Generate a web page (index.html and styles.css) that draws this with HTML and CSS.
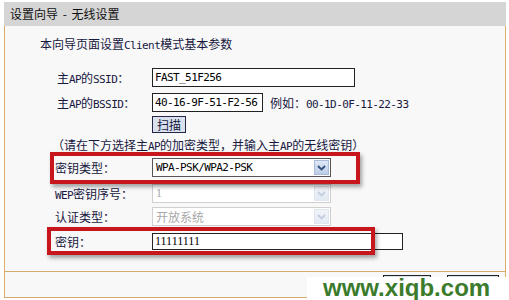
FILE: index.html
```html
<!DOCTYPE html>
<html lang="zh-CN">
<head>
  <meta charset="UTF-8" />
  <title>设置向导 - 无线设置</title>
  <link rel="stylesheet" href="styles.css">
</head>
<body>
  <div class="wizard">
    <div class="title">设置向导 - 无线设置</div>
    <div class="panel">
      <p class="intro">本向导页面设置<span class="en">Client</span>模式基本参数</p>

      <div class="row row-ssid">
        <span class="label">主<span class="en">AP</span>的<span class="en">SSID</span>：</span>
        <input class="text text-ssid" type="text" value="FAST_51F256" />
      </div>
      <div class="row row-bssid">
        <span class="label">主<span class="en">AP</span>的<span class="en">BSSID</span>：</span>
        <input class="text text-bssid" type="text" value="40-16-9F-51-F2-56" />
        <span class="hint">例如：<span class="en">00-1D-0F-11-22-33</span></span>
      </div>
      <div class="row row-scan">
        <button class="btn-scan">扫描</button>
      </div>
      <p class="note">（请在下方选择主<span class="en">AP</span>的加密类型，并输入主<span class="en">AP</span>的无线密钥）</p>

      <div class="mark mark-type">
        <div class="row">
          <span class="label">密钥类型：</span>
          <div class="select">
            <span class="value en">WPA-PSK/WPA2-PSK</span>
            <span class="arrow"><svg width="9" height="6" viewBox="0 0 9 6"><path d="M1 1l3.5 3.5L8 1" fill="none" stroke="currentColor" stroke-width="1.8"/></svg></span>
          </div>
        </div>
      </div>
      <div class="row row-wep">
        <span class="label"><span class="en">WEP</span>密钥序号：</span>
        <div class="select disabled">
          <span class="value num">1</span>
          <span class="arrow"><svg width="9" height="6" viewBox="0 0 9 6"><path d="M1 1l3.5 3.5L8 1" fill="none" stroke="currentColor" stroke-width="1.8"/></svg></span>
        </div>
      </div>
      <div class="row row-auth">
        <span class="label">认证类型：</span>
        <div class="select disabled">
          <span class="value">开放系统</span>
          <span class="arrow"><svg width="9" height="6" viewBox="0 0 9 6"><path d="M1 1l3.5 3.5L8 1" fill="none" stroke="currentColor" stroke-width="1.8"/></svg></span>
        </div>
      </div>
      <div class="mark mark-key">
        <div class="row">
          <span class="label">密钥：</span>
          <input class="text text-key" type="text" value="11111111" />
        </div>
      </div>
    </div>
    <div class="footer">
      <button class="btn-foot btn-back" aria-label="上一步"></button>
      <button class="btn-foot btn-next" aria-label="下一步"></button>
    </div>
  </div>
  <div class="watermark">www.xiqb.com</div>
</body>
</html>
```

FILE: styles.css
```css
* {
  box-sizing: border-box;
  margin: 0;
  padding: 0;
}
body {
  width: 509px;
  height: 300px;
  overflow: hidden;
  background: #fff;
  font-family: "Noto Sans CJK SC", sans-serif;
  font-size: 12px;
  color: #17173f;
  padding-top: 2px;
  position: relative;
}
.en {
  font-family: "DejaVu Sans Mono", "Noto Sans CJK SC", monospace;
  font-size: 11px;
  letter-spacing: -0.6px;
}
.wizard {
  margin-left: 4px;
  width: 502px;
}
.title {
  height: 24px;
  line-height: 24px;
  padding-left: 6px;
  background: #d5d5d5;
  color: #111;
  font-size: 12px;
  word-spacing: 2px;
}
.panel {
  height: 246px;
  background: #f8f8f8;
  border-left: 1px solid #dcae6a;
  border-right: 1px solid #dcae6a;
  border-bottom: 1px solid #d6aa6c;
  padding-left: 50px;
}
.intro {
  margin-left: -15px;
  padding-top: 9px;
  line-height: 17px;
}
.row {
  display: flex;
  align-items: center;
  height: 19px;
}
.label {
  width: 97px;
  flex: none;
}
.row-ssid {
  margin-top: 14px;
}
.row-ssid .label,
.row-bssid .label {
  padding-left: 2px;
}
.row-bssid {
  margin-top: 6px;
}
.text {
  height: 19px;
  border: 1px solid #222;
  background: #fff;
  color: #000;
  padding: 0 2px;
  font-family: "DejaVu Sans Mono", monospace;
  font-size: 11px;
  letter-spacing: -0.6px;
  outline: none;
}
.text-ssid {
  width: 203px;
}
.text-bssid {
  width: 111px;
}
.hint {
  margin-left: 7px;
}
.row-scan {
  margin-top: 4px;
  height: 17px;
  padding-left: 97px;
}
.btn-scan {
  width: 34px;
  height: 17px;
  border: 1px solid #26264a;
  background: #d9e1ec;
  color: #17173f;
  font-family: "Noto Sans CJK SC", sans-serif;
  font-size: 12px;
  line-height: 15px;
}
.note {
  margin-left: -3px;
  margin-top: 4px;
  height: 15px;
  line-height: 15px;
}
.mark {
  position: relative;
}
.mark::after {
  content: "";
  position: absolute;
  inset: 0;
  border: 4px solid #c8161d;
  box-shadow: 2px 3px 4px rgba(0, 0, 0, 0.35);
  pointer-events: none;
}
.mark-type {
  margin-left: -5px;
  width: 310px;
  height: 32px;
  padding: 6px 0 0 5px;
}
.select {
  display: flex;
  align-items: center;
  width: 179px;
  height: 19px;
  border: 1px solid #555;
  background: #fff;
  color: #000;
  padding: 1px;
}
.select .value {
  flex: 1;
  padding-left: 2px;
}
.select .num {
  font-family: "Liberation Serif", serif;
}
.arrow {
  width: 15px;
  height: 15px;
  flex: none;
  display: flex;
  align-items: center;
  justify-content: center;
  background: linear-gradient(#dfe8f6, #bccde8);
  border: 1px solid #a8bbd8;
  color: #36507c;
}
.select.disabled {
  border-color: #cfcfcf;
  color: #a8a8a8;
}
.select.disabled .arrow {
  background: linear-gradient(#f1f4f9, #e4eaf3);
  border-color: #e0e6ee;
  color: #c2cde0;
}
.row-auth {
  margin-top: 4px;
}
.mark-key {
  margin-top: 1px;
  margin-left: -8px;
  width: 328px;
  height: 28px;
  padding: 5px 0 0 8px;
}
.mark-key .row {
  height: 18px;
}
.text-key {
  width: 251px;
  height: 17px;
  font-family: "Liberation Serif", serif;
  font-size: 12px;
  letter-spacing: 0;
  flex: none;
}
.footer {
  height: 26px;
  background: #f8f8f8;
  border-left: 1px solid #dcae6a;
  border-right: 1px solid #dcae6a;
  border-bottom: 1px solid #d6aa6c;
  display: flex;
  justify-content: flex-end;
  gap: 16px;
  padding: 3px 6px 0 0;
}
.btn-foot {
  height: 20px;
  border: 1px solid #222;
  background: #d9e1ec;
}
.btn-back {
  width: 48px;
}
.btn-next {
  width: 52px;
}
.watermark {
  position: absolute;
  left: 307px;
  top: 277px;
  width: 202px;
  height: 23px;
  background: #fff;
  padding-left: 16px;
  font-family: "Liberation Sans", sans-serif;
  font-weight: bold;
  font-size: 24px;
  line-height: 21px;
  color: #3b7b2c;
}
```
